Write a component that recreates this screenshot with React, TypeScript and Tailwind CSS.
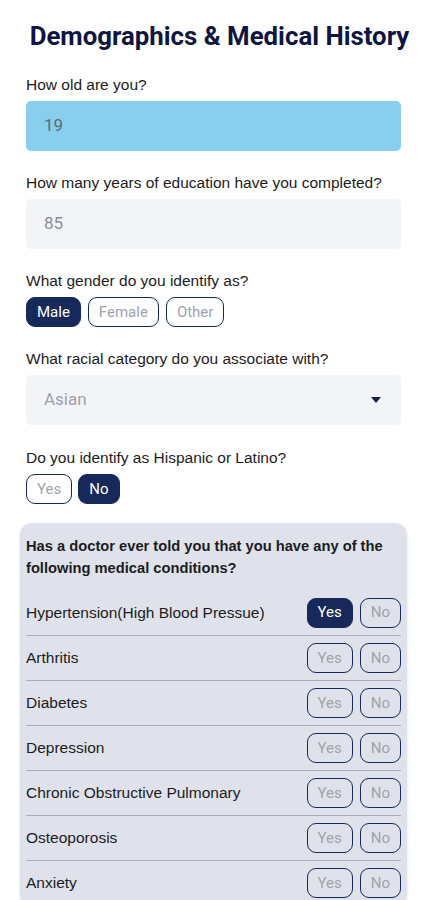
import React, { useState } from 'react';

const conditions = [
  'Hypertension(High Blood Pressue)',
  'Arthritis',
  'Diabetes',
  'Depression',
  'Chronic Obstructive Pulmonary',
  'Osteoporosis',
  'Anxiety',
];

const Choice = ({ label, active, onClick }: { label: string; active: boolean; onClick: () => void }) => (
  <button
    onClick={onClick}
    className={`h-[30px] px-[10px] rounded-[9px] border-[1.5px] border-[#16295a] font-['Roboto',sans-serif] text-[15px] leading-none ${
      active ? 'bg-[#16295a] text-white' : 'bg-transparent text-[#a0a3ab]'
    }`}
  >
    {label}
  </button>
);

const App = () => {
  const [gender, setGender] = useState('Male');
  const [hispanic, setHispanic] = useState('No');
  const [answers, setAnswers] = useState<Record<string, string>>({
    'Hypertension(High Blood Pressue)': 'Yes',
  });

  return (
    <div className="min-h-[900px] bg-white px-[26px] pt-[19px] font-['Liberation_Sans',Arial,sans-serif] text-[#1c1c1e]">
      <h1 className="whitespace-nowrap text-center text-[25.8px] leading-[34px] font-bold text-[#0e1541] -mx-[20px] pl-[12px] font-['Roboto',sans-serif]">
        Demographics &amp; Medical History
      </h1>

      <div className="mt-[22px]">
        <div className="text-[15.5px] leading-[20px]">How old are you?</div>
        <div className="mt-[6px] h-[50px] rounded-[5px] bg-[#88cfee] flex items-center px-[18px] font-['Roboto',sans-serif] text-[17px] text-[#5d6b78]">
          19
        </div>
      </div>

      <div className="mt-[22px]">
        <div className="text-[15.5px] leading-[20px]">How many years of education have you completed?</div>
        <div className="mt-[6px] h-[50px] rounded-[5px] bg-[#f2f4f7] flex items-center px-[18px] font-['Roboto',sans-serif] text-[17px] text-[#8a8e96]">
          85
        </div>
      </div>

      <div className="mt-[22px]">
        <div className="text-[15.5px] leading-[20px]">What gender do you identify as?</div>
        <div className="mt-[6px] flex gap-[7px]">
          {['Male', 'Female', 'Other'].map(g => (
            <Choice key={g} label={g} active={gender === g} onClick={() => setGender(g)} />
          ))}
        </div>
      </div>

      <div className="mt-[22px]">
        <div className="text-[15.5px] leading-[20px]">What racial category do you associate with?</div>
        <div className="mt-[6px] h-[50px] rounded-[5px] bg-[#f2f4f7] flex items-center justify-between pl-[18px] pr-[20px] font-['Roboto',sans-serif] text-[17px] text-[#9ea2aa]">
          <span>Asian</span>
          <svg width="10" height="6" viewBox="0 0 10 6">
            <path d="M0 0 L10 0 L5 6 Z" fill="#16214a" />
          </svg>
        </div>
      </div>

      <div className="mt-[23px]">
        <div className="text-[15.5px] leading-[20px]">Do you identify as Hispanic or Latino?</div>
        <div className="mt-[6px] flex gap-[6px]">
          {['Yes', 'No'].map(v => (
            <Choice key={v} label={v} active={hispanic === v} onClick={() => setHispanic(v)} />
          ))}
        </div>
      </div>

      <div className="mt-[19px] -mx-[6px] rounded-[12px] bg-[#dfe2ea] px-[6px] pt-[12px] shadow-[0_1px_3px_rgba(0,0,0,0.12)]">
        <div className="text-[14.7px] leading-[22px] font-bold">
          Has a doctor ever told you that you have any of the following medical conditions?
        </div>
        <div className="mt-[11px]">
          {conditions.map((c, i) => (
            <div
              key={c}
              className={`flex items-center justify-between border-b border-[#a8acb9] ${i === 0 ? 'h-[46px]' : 'h-[45px]'}`}
            >
              <span className="text-[15.5px]">{c}</span>
              <div className="flex gap-[7px]">
                {['Yes', 'No'].map(v => (
                  <Choice
                    key={v}
                    label={v}
                    active={answers[c] === v}
                    onClick={() => setAnswers(prev => ({ ...prev, [c]: v }))}
                  />
                ))}
              </div>
            </div>
          ))}
        </div>
      </div>
    </div>
  );
};

export default App;
